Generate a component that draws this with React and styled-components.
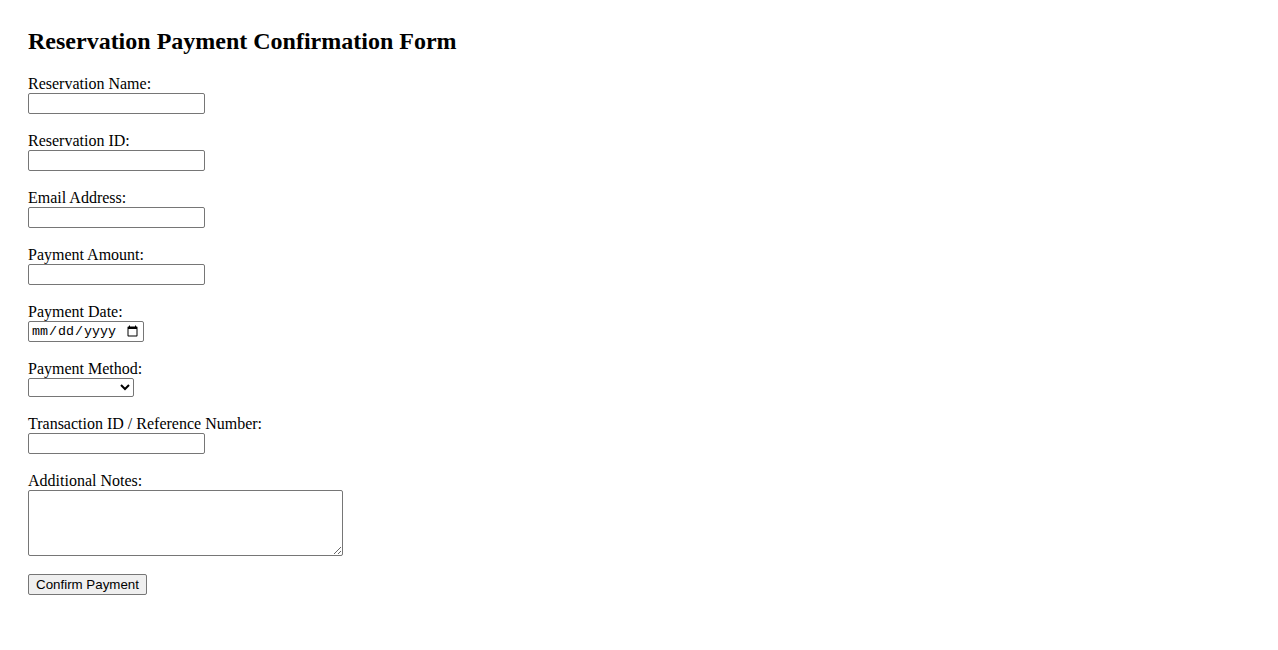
import React from "react";
import styled, { createGlobalStyle } from "styled-components";

const GlobalStyle = createGlobalStyle`
  html, body { margin: 0; padding: 0; background: #ffffff; }
  body { font-family: "Liberation Serif", "Times New Roman", serif; color: #000000; }
`;

const Page = styled.div`
  padding: 28px;
`;

const Title = styled.h2`
  margin: 0 0 21px 0;
  font-family: "Liberation Serif", "Times New Roman", serif;
  font-size: 24px;
  font-weight: bold;
  line-height: 26px;
`;

const Form = styled.form`
  display: flex;
  flex-direction: column;
  align-items: flex-start;
  gap: 18px;
`;

const Field = styled.div`
  display: flex;
  flex-direction: column;
  align-items: flex-start;
`;

const Label = styled.label`
  font-size: 16px;
  line-height: 18px;
  height: 18px;
`;

const controlBase = `
  box-sizing: border-box;
  margin: 0;
  font-family: "Liberation Sans", Arial, sans-serif;
  font-size: 13.33px;
  border: 1px solid #767676;
  border-radius: 2px;
  background: #ffffff;
  color: #000000;
`;

const TextInput = styled.input`
  ${controlBase}
  width: 177px;
  height: 21px;
  padding: 1px 2px;
`;

const DateInput = styled.input`
  ${controlBase}
  width: 116px;
  height: 21px;
  padding: 1px 2px;
  font-family: "Liberation Mono", "Courier New", monospace;
  font-size: 13.33px;
`;

const Select = styled.select`
  ${controlBase}
  width: 106px;
  height: 19px;
  padding: 0;
`;

const TextArea = styled.textarea`
  ${controlBase}
  width: 315px;
  height: 66px;
  padding: 2px;
  resize: both;
`;

const SubmitButton = styled.button`
  ${controlBase}
  width: 119px;
  height: 21px;
  padding: 1px 6px;
  background: #efefef;
  color: #000000;
  cursor: pointer;
`;

const textFields = [
  { id: "resName", label: "Reservation Name:", type: "text" },
  { id: "resId", label: "Reservation ID:", type: "text" },
  { id: "email", label: "Email Address:", type: "email" },
  { id: "amount", label: "Payment Amount:", type: "text" },
];

export default function App() {
  return (
    <>
      <GlobalStyle />
      <Page>
        <Title>Reservation Payment Confirmation Form</Title>
        <Form onSubmit={(e) => e.preventDefault()}>
          {textFields.map((f) => (
            <Field key={f.id}>
              <Label htmlFor={f.id}>{f.label}</Label>
              <TextInput id={f.id} type={f.type} />
            </Field>
          ))}
          <Field>
            <Label htmlFor="payDate">Payment Date:</Label>
            <DateInput id="payDate" type="date" />
          </Field>
          <Field>
            <Label htmlFor="payMethod">Payment Method:</Label>
            <Select id="payMethod" defaultValue="">
              <option value=""></option>
              <option value="card">Credit Card</option>
              <option value="bank">Bank Transfer</option>
              <option value="cash">Cash</option>
            </Select>
          </Field>
          <Field>
            <Label htmlFor="txn">Transaction ID / Reference Number:</Label>
            <TextInput id="txn" type="text" />
          </Field>
          <Field>
            <Label htmlFor="notes">Additional Notes:</Label>
            <TextArea id="notes" />
          </Field>
          <SubmitButton type="submit">Confirm Payment</SubmitButton>
        </Form>
      </Page>
    </>
  );
}
